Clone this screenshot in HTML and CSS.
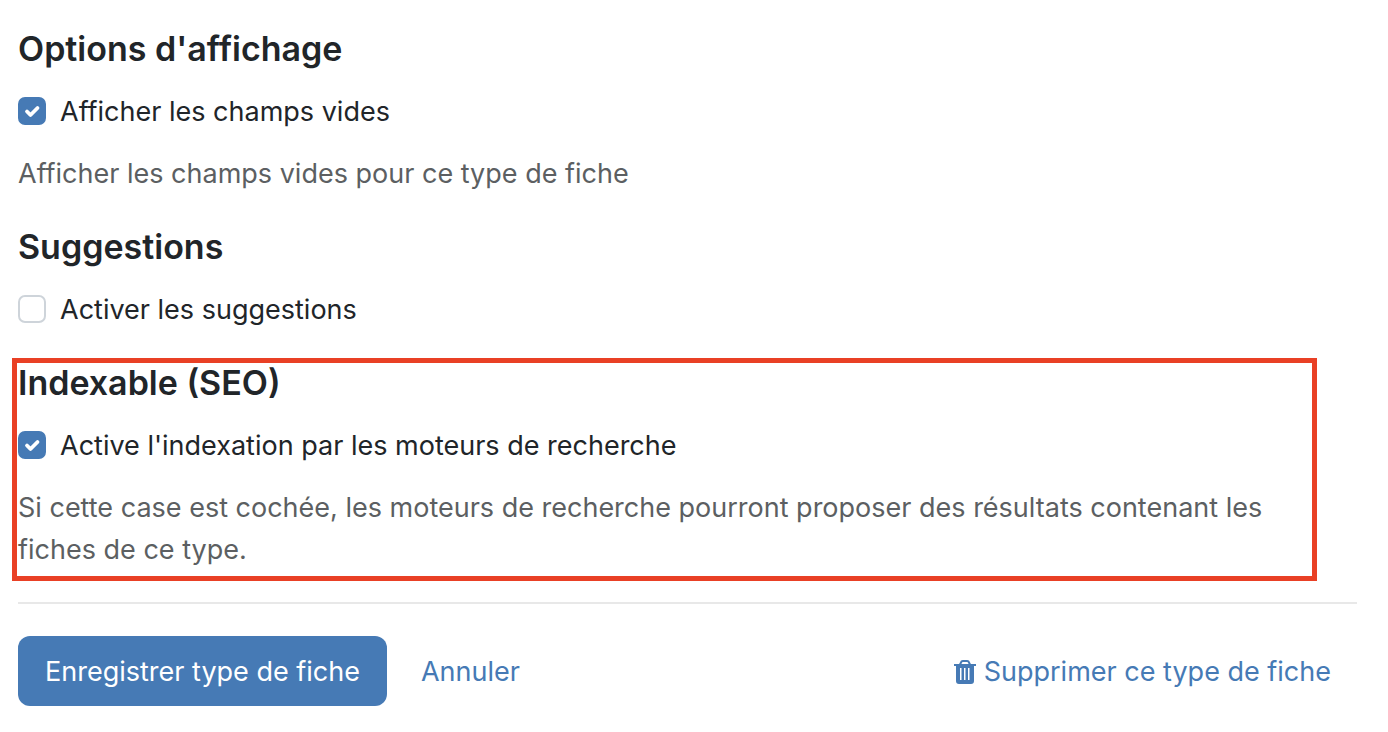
FILE: index.html
```html
<!DOCTYPE html>
<html lang="fr">
<head>
<meta charset="utf-8">
<meta name="viewport" content="width=device-width, initial-scale=1">
<title>Type de fiche</title>
<link rel="stylesheet" href="styles.css">
</head>
<body>
<form class="form">
  <section class="group">
    <h2 class="title">Options d'affichage</h2>
    <label class="check"><input class="box" type="checkbox" checked>Afficher les champs vides</label>
    <p class="help">Afficher les champs vides pour ce type de fiche</p>
  </section>
  <section class="group">
    <h2 class="title">Suggestions</h2>
    <label class="check"><input class="box" type="checkbox">Activer les suggestions</label>
  </section>
  <section class="group highlight">
    <h2 class="title">Indexable (SEO)</h2>
    <label class="check"><input class="box" type="checkbox" checked>Active l'indexation par les moteurs de recherche</label>
    <p class="help">Si cette case est cochée, les moteurs de recherche pourront proposer des résultats contenant les fiches de ce type.</p>
  </section>
  <footer class="actions">
    <button class="save" type="submit">Enregistrer type de fiche</button>
    <a class="link" href="#">Annuler</a>
    <a class="link delete" href="#"><svg class="trash" viewBox="0 0 22 24" aria-hidden="true"><path d="M6 4.500 7.500 1.500Q8 1 9 1h4q1 0 1.500.5L16 4.500" fill="none" stroke="currentColor" stroke-width="2"/><path d="M0 4h22v2H20v15q0 3-3 3H5q-3 0-3-3V6H0ZM6 8v12h1.500V8ZM10 8v12h1.500V8ZM14 8v12h1.500V8Z" fill="currentColor" fill-rule="evenodd"/></svg>Supprimer ce type de fiche</a>
  </footer>
</form>
</body>
</html>
```
FILE: styles.css
```css
* { box-sizing: border-box; }
body {
  margin: 0;
  background: #fff;
  color: #212529;
  font: 27px/42px Inter, "Liberation Sans", sans-serif;
}
.form { padding: 29px 31px 26px 18px; }
.group { margin-bottom: 32px; }
.title { margin: 0 0 22px; font-size: 34px; line-height: 40px; font-weight: 600; }
.check { display: flex; align-items: center; gap: 14px; }
.box {
  appearance: none;
  flex: none;
  width: 28px;
  height: 28px;
  margin: 0 0 2px;
  border: 2px solid #ced4da;
  border-radius: 7px;
  background: #fff;
}
.box:checked {
  border-color: #467ab5;
  background: #467ab5 url("data:image/svg+xml,%3Csvg xmlns='http://www.w3.org/2000/svg' viewBox='0 0 24 24'%3E%3Cpath d='M7 12.500l3.500 3.500L17.500 9' fill='none' stroke='white' stroke-width='3.800' stroke-linecap='round' stroke-linejoin='round'/%3E%3C/svg%3E") center / 24px no-repeat;
}
.help { margin: 20px 0 0; color: #5c5f62; }
.highlight {
  margin: -5px 40px 21px -6px;
  padding: 0 20px 5px 1px;
  border: 5px solid #e94025;
}
.actions {
  display: flex;
  align-items: center;
  padding-top: 32px;
  border-top: 2px solid #e8e8e8;
}
.save {
  height: 70px;
  padding: 2px 27px 0;
  border: 0;
  border-radius: 12px;
  background: #467ab5;
  color: #fff;
  font: inherit;
}
.link { margin-left: 34px; padding-top: 2px; color: #467ab5; text-decoration: none; }
.delete { display: flex; align-items: center; gap: 8px; margin: 0 26px 0 auto; }
.trash { width: 22px; height: 24px; }
```
